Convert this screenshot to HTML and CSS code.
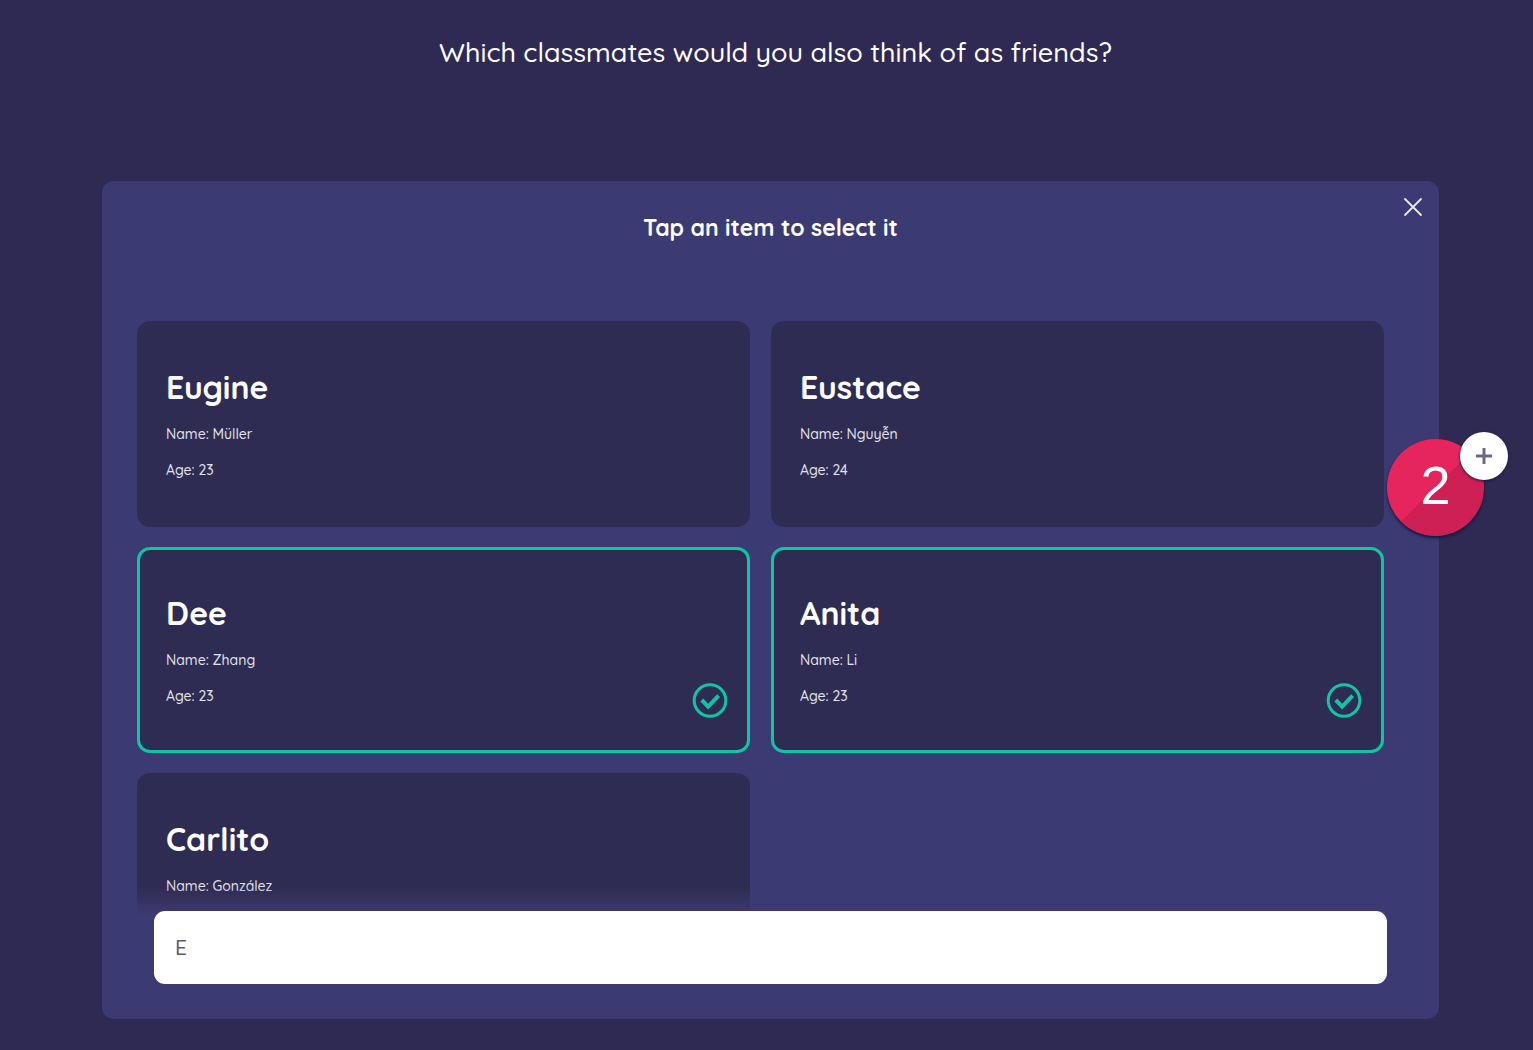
FILE: index.html
```html
<!DOCTYPE html>
<html lang="en">
<head>
<meta charset="utf-8">
<meta name="viewport" content="width=device-width, initial-scale=1">
<title>Which classmates would you also think of as friends?</title>
<link rel="stylesheet" href="styles.css">
</head>
<body>
<main class="stage">
  <h1 class="prompt">Which classmates would you also think of as friends?</h1>
  <section class="panel" aria-labelledby="panel-title">
    <button class="close" type="button" aria-label="Close">
      <svg viewBox="0 0 20 20" width="20" height="20" fill="none" stroke="currentColor" stroke-width="1.8" stroke-linecap="round"><path d="M2 2l16 16M18 2L2 18"/></svg>
    </button>
    <h2 class="panel-title" id="panel-title">Tap an item to select it</h2>
    <div class="list">
      <button class="card" type="button" aria-pressed="false">
        <span class="card-name">Eugine</span>
        <span class="card-line">Name: Müller</span>
        <span class="card-line">Age: 23</span>
      </button>
      <button class="card" type="button" aria-pressed="false">
        <span class="card-name">Eustace</span>
        <span class="card-line">Name: Nguyễn</span>
        <span class="card-line">Age: 24</span>
      </button>
      <button class="card selected" type="button" aria-pressed="true">
        <span class="card-name">Dee</span>
        <span class="card-line">Name: Zhang</span>
        <span class="card-line">Age: 23</span>
        <svg class="check" viewBox="0 0 36 36" fill="none" stroke="currentColor"><circle cx="18" cy="17.5" r="15.8" stroke-width="3"/><path d="M9.8 17l6.4 6.6 10.4-11" stroke-width="4"/></svg>
      </button>
      <button class="card selected" type="button" aria-pressed="true">
        <span class="card-name">Anita</span>
        <span class="card-line">Name: Li</span>
        <span class="card-line">Age: 23</span>
        <svg class="check" viewBox="0 0 36 36" fill="none" stroke="currentColor"><circle cx="18" cy="17.5" r="15.8" stroke-width="3"/><path d="M9.8 17l6.4 6.6 10.4-11" stroke-width="4"/></svg>
      </button>
      <button class="card" type="button" aria-pressed="false">
        <span class="card-name">Carlito</span>
        <span class="card-line">Name: González</span>
      </button>
    </div>
    <input class="filter" type="text" value="E" aria-label="Filter classmates">
  </section>
  <button class="bin" type="button" aria-label="2 selected, add more">
    <span class="count">2</span>
    <span class="plus"><svg viewBox="0 0 16 16" width="16" height="16" fill="none" stroke="currentColor" stroke-width="3"><path d="M8 0v16M0 8h16"/></svg></span>
  </button>
</main>
</body>
</html>
```
FILE: styles.css
```css
:root {
  --page: #2f2a54;
  --panel: #3c3a73;
  --card: #2f2c53;
  --accent: #10c5a2;
  --pink: #e6255c;
  --pink-dark: #ce2055;
}
* { box-sizing: border-box; }
body {
  margin: 0;
  background: var(--page);
  color: #fff;
  font-family: Quicksand, Lato, sans-serif;
}
button, input { font: inherit; color: inherit; }
button { border: 0; padding: 0; background: none; cursor: pointer; }
.stage {
  position: relative;
  display: flex;
  flex-direction: column;
  height: 100vh;
  padding: 32px 94px 31px 102px;
}
.prompt {
  margin: 0 0 109px;
  padding-left: 10px;
  font-size: 27px;
  line-height: 40px;
  font-weight: 500;
  text-align: center;
}
.panel {
  position: relative;
  display: flex;
  flex-direction: column;
  flex: 1;
  min-height: 0;
  padding: 32px 52px 35px 35px;
  border-radius: 12px;
  background: var(--panel);
}
.close {
  position: absolute;
  top: 16px;
  right: 16px;
  width: 20px;
  height: 20px;
  color: #e9e9ed;
}
.close svg, .plus svg { display: block; }
.panel-title {
  margin: 0 0 78px;
  padding-left: 17px;
  font-size: 23px;
  line-height: 30px;
  font-weight: 700;
  text-align: center;
}
.list {
  position: relative;
  display: grid;
  grid-template-columns: 1fr 1fr;
  grid-auto-rows: 206px;
  gap: 20px 21px;
  flex: 1;
  min-height: 0;
  margin: 0 3px -4px 0;
  overflow: hidden;
}
.list::after {
  content: "";
  position: absolute;
  inset: auto 0 0;
  height: 28px;
  background: linear-gradient(transparent, var(--panel));
}
.card {
  position: relative;
  display: flex;
  flex-direction: column;
  align-items: flex-start;
  justify-content: flex-start;
  padding: 45px 26px;
  border: 3px solid transparent;
  border-radius: 13px;
  background: var(--card) border-box;
  text-align: left;
}
.card.selected { border-color: var(--accent); }
.card-name {
  margin-bottom: 11px;
  font-size: 32px;
  line-height: 36px;
  font-weight: 700;
}
.card-line {
  height: 36px;
  font-size: 14px;
  line-height: 36px;
  font-weight: 500;
  color: #e3e3ea;
}
.check {
  position: absolute;
  right: 19px;
  bottom: 31px;
  width: 36px;
  height: 36px;
  color: var(--accent);
}
.filter {
  position: relative;
  height: 73px;
  margin-left: 17px;
  padding: 0 21px 2px;
  border: 0;
  border-radius: 11px;
  background: #fff;
  color: #5b5878;
  font-size: 21px;
  font-weight: 500;
  outline: 0;
}
.bin {
  position: absolute;
  top: 439px;
  right: 49px;
  width: 97px;
  height: 97px;
  border-radius: 50%;
  background: linear-gradient(135deg, var(--pink) 50%, var(--pink-dark) 50%);
  box-shadow: 0 2px 3px #17143a;
}
.count {
  display: block;
  font-family: "Liberation Sans", sans-serif;
  font-size: 54px;
  line-height: 92px;
  height: 97px;
}
.plus {
  position: absolute;
  top: -7px;
  right: -24px;
  display: grid;
  place-items: center;
  width: 48px;
  height: 48px;
  border-radius: 50%;
  background: #fff;
  color: #6b6882;
  box-shadow: 0 1px 3px #17143a;
}
```
